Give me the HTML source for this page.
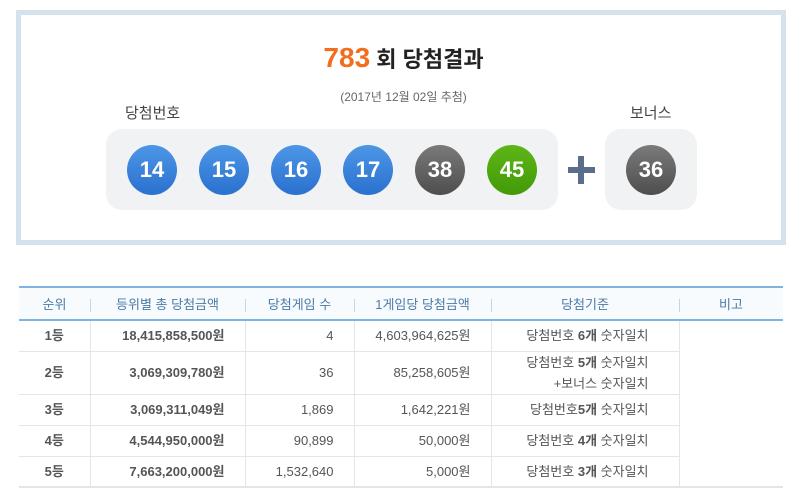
<!DOCTYPE html>
<html><head><meta charset="utf-8"><style>
*{margin:0;padding:0;box-sizing:border-box}
body{width:807px;height:497px;background:#fff;font-family:"Liberation Sans","Noto Sans CJK KR",sans-serif;position:relative;overflow:hidden;color:#555}
.box{position:absolute;left:16px;top:10px;width:770px;height:235px;border:5px solid #d4e2ee;background:#fff}
.abs{position:absolute}
.title{left:0;width:807px;top:42px;text-align:center;font-size:22px;font-weight:bold;color:#222}
.title b{color:#f26d1c;font-size:28px}
.sub{left:0;width:807px;top:88px;text-align:center;font-size:12px;color:#666}
.lab{font-size:15px;color:#444}
.panel{background:#f1f2f4;border-radius:16px}
.ball{position:absolute;width:50px;height:50px;border-radius:50%;color:#fff;font-weight:bold;font-size:22px;text-align:center;line-height:50px;top:145px}
.blue{background:linear-gradient(#4d96e6,#2a71cf)}
.gray{background:linear-gradient(#7a7a7a,#4e4e4e)}
.green{background:linear-gradient(#5db617,#439a08)}
table{position:absolute;left:19px;top:286px;width:764px;border-collapse:collapse;font-size:13px}
th{height:33px;background:#f7fbfd;border-top:2px solid #7fb3e0;border-bottom:2px solid #7fb3e0;font-weight:normal;color:#4a7ba8;font-size:13px;position:relative}
th+th:before{content:"";position:absolute;left:0;top:11px;height:13px;border-left:1px solid #bcd6ec}
td{border-bottom:1px solid #e5e5e5;border-left:1px solid #e5e5e5;height:31px;text-align:right;padding-right:20px;line-height:21px}
td:first-child{border-left:none;text-align:center;padding:0;font-weight:bold}
tr:last-child td{border-bottom:2px solid #e5e5e5}
.b{font-weight:bold}
td.c{padding-right:30px}
</style></head><body>
<div class="box"></div>
<div class="abs title"><b>783</b> 회 당첨결과</div>
<div class="abs sub">(2017년 12월 02일 추첨)</div>
<div class="abs lab" style="left:125px;top:102px">당첨번호</div>
<div class="abs lab" style="left:630px;top:102px">보너스</div>
<div class="abs panel" style="left:106px;top:129px;width:452px;height:81px"></div>
<div class="abs panel" style="left:605px;top:129px;width:92px;height:81px"></div>
<div class="ball blue" style="left:127px">14</div>
<div class="ball blue" style="left:199px">15</div>
<div class="ball blue" style="left:271px">16</div>
<div class="ball blue" style="left:343px">17</div>
<div class="ball gray" style="left:415px">38</div>
<div class="ball green" style="left:487px">45</div>
<div class="ball gray" style="left:626px">36</div>
<div class="abs" style="left:568px;top:167px;width:27px;height:6px;background:#5a6e8c"></div>
<div class="abs" style="left:578px;top:156px;width:6px;height:28px;background:#5a6e8c"></div>
<table>
<tr><th style="width:71px">순위</th><th style="width:155px">등위별 총 당첨금액</th><th style="width:109px">당첨게임 수</th><th style="width:137px">1게임당 당첨금액</th><th style="width:188px">당첨기준</th><th>비고</th></tr>
<tr><td>1등</td><td class="b">18,415,858,500원</td><td>4</td><td>4,603,964,625원</td><td class="c">당첨번호 <b>6개</b> 숫자일치</td><td rowspan="5" style="border-bottom:2px solid #e5e5e5"></td></tr>
<tr><td style="height:43px">2등</td><td class="b">3,069,309,780원</td><td>36</td><td>85,258,605원</td><td class="c">당첨번호 <b>5개</b> 숫자일치<br>+보너스 숫자일치</td></tr>
<tr><td>3등</td><td class="b">3,069,311,049원</td><td>1,869</td><td>1,642,221원</td><td class="c">당첨번호<b>5개</b> 숫자일치</td></tr>
<tr><td>4등</td><td class="b">4,544,950,000원</td><td>90,899</td><td>50,000원</td><td class="c">당첨번호 <b>4개</b> 숫자일치</td></tr>
<tr><td>5등</td><td class="b">7,663,200,000원</td><td>1,532,640</td><td>5,000원</td><td class="c">당첨번호 <b>3개</b> 숫자일치</td></tr>
</table>
</body></html>
